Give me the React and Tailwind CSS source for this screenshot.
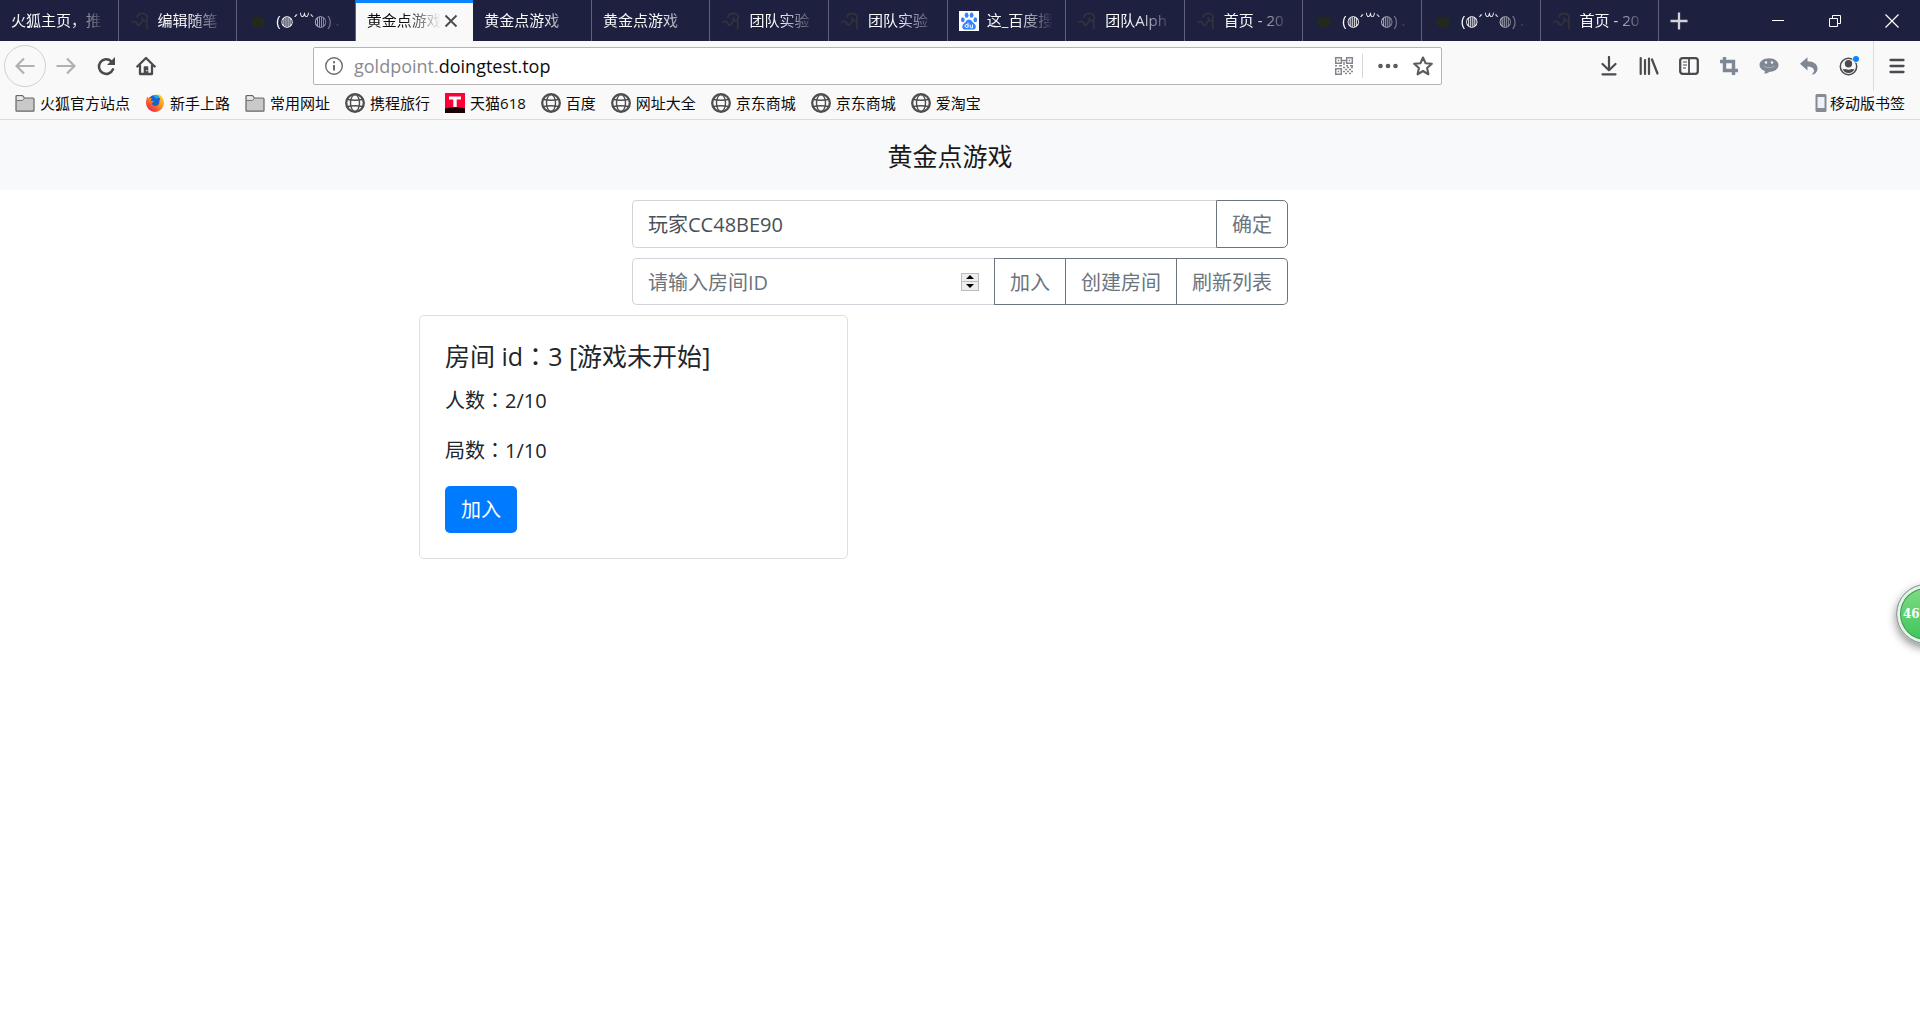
import { useState } from "react";

const TABS = [
  { title: "火狐主页，推" },
  { title: "编辑随笔", icon: "blog" },
  { title: "(◍´꒳`◍) .", icon: "moss" },
  { title: "黄金点游戏", active: true },
  { title: "黄金点游戏" },
  { title: "黄金点游戏" },
  { title: "团队实验", icon: "blog" },
  { title: "团队实验", icon: "blog" },
  { title: "这_百度搜", icon: "baidu" },
  { title: "团队Alph", icon: "blog" },
  { title: "首页 - 20", icon: "blog" },
  { title: "(◍´꒳`◍) .", icon: "moss" },
  { title: "(◍´꒳`◍) .", icon: "moss" },
  { title: "首页 - 20", icon: "blog" },
];

const BOOKMARKS = [
  { name: "火狐官方站点", icon: "folder" },
  { name: "新手上路", icon: "firefox" },
  { name: "常用网址", icon: "folder" },
  { name: "携程旅行", icon: "globe" },
  { name: "天猫618", icon: "tmall" },
  { name: "百度", icon: "globe" },
  { name: "网址大全", icon: "globe" },
  { name: "京东商城", icon: "globe" },
  { name: "京东商城", icon: "globe" },
  { name: "爱淘宝", icon: "globe" },
];

const ROOMS = [{ id: 3, status: "游戏未开始", players: "2/10", rounds: "1/10" }];

function Svg({ children, className = "size-5 shrink-0", viewBox = "0 0 20 20" }) {
  return (
    <svg viewBox={viewBox} className={className} fill="none" aria-hidden="true">
      {children}
    </svg>
  );
}

function Favicon({ type }) {
  if (type === "baidu") {
    return (
      <Svg>
        <rect width="20" height="20" fill="#fff" />
        <g fill="#3385ff">
          <ellipse cx="3.8" cy="8.8" rx="1.9" ry="2.5" />
          <ellipse cx="7.6" cy="4.2" rx="1.9" ry="2.6" />
          <ellipse cx="12.6" cy="4.2" rx="1.9" ry="2.6" />
          <ellipse cx="16.3" cy="8.8" rx="1.9" ry="2.5" />
          <path d="M10 8.6c2.2 0 2.8 1.9 4.3 3.2 1.7 1.4 2.8 2.6 2.5 4.4-.4 2.2-2.3 2.7-4 2.4-1.900-.3-3.600-.3-5.500 0-1.700.3-3.700-.2-4-2.400-.3-1.800.8-3 2.400-4.400C7.200 10.500 7.800 8.600 10 8.600z" />
        </g>
        <path d="M9 11.700v5M9 14.500a1.500 1.500 0 1 0 0 1M11.200 13.600v2.300q0 .9 1 .9h1.300v-3.200" stroke="#fff" strokeWidth="1" />
      </Svg>
    );
  }
  if (type === "moss") {
    return (
      <Svg>
        <path d="M3 9c1-3 3-3 5-2 0-3 2-4 4-3-1 1-1 2 0 3 3-1 5 1 5 4-1 3-3 6-7 6S3 14 3 9z" fill="#23291c" />
      </Svg>
    );
  }
  return (
    <Svg>
      <path
        d="M7 6c0-3 5-4.500 8-3 3 1.800 3 5.500.5 6.500-2.300.8-4-1-3.200-2.500M16.500 8.500c.8 3-.5 5.500.5 9M2 11c3-1.500 4.500 0 5 2 .3 1.500 1.800 1.500 2.800.3L13 9"
        stroke="#32323a"
        strokeWidth="1.800"
        strokeLinecap="round"
      />
    </Svg>
  );
}

function BookmarkIcon({ type }) {
  if (type === "folder") {
    return (
      <Svg>
        <path d="M1 17.500V3.500q0-1 1-1h5.500l2 2.500H18q1 0 1 1v11.500q0 .7-.7.700H1.700q-.7 0-.7-.7z" fill="#c9c9c9" stroke="#666" strokeWidth="1.200" />
        <path d="M1.500 7.500h5.800l2.200-2" stroke="#777" />
        <path d="M2 6.800V3.600h5l1.500 1.900-1.500 1.300z" fill="#e8e8e8" />
      </Svg>
    );
  }
  if (type === "firefox") {
    return (
      <Svg>
        <defs>
          <linearGradient id="fox" x1="1" y1="0" x2="0.200" y2="1">
            <stop offset="0" stopColor="#ffe226" />
            <stop offset="0.450" stopColor="#ff9a1a" />
            <stop offset="1" stopColor="#e8194f" />
          </linearGradient>
        </defs>
        <circle cx="10" cy="9.500" r="7.500" fill="#1665c9" />
        <path d="M8 2.500c2-1.500 6-1 7 2l-4 1z" fill="#2aa7e8" />
        <path
          d="M2.500 3.500c.3 1 .8 1.400 1.500 1.800C5 4.800 6 5 7 5.300c-.8.7-1.200 1.400-1 2.200.6.6 1.700.5 2.800.6-.2 1.300-1.800 1.600-2 2.500.5 2.300 4 3 6 1.600 1.500-1 2-3 1.200-5.200 0 0 .8.300 1.200 1C15.300 5 13.500 3.500 13 1c3 1 6 4.500 6 9a9 9 0 0 1-18 0c0-2.500.5-5 1.500-6.500z"
          fill="url(#fox)"
        />
      </Svg>
    );
  }
  if (type === "tmall") {
    return (
      <Svg>
        <rect width="20" height="20" fill="#ff0036" />
        <path d="M0 15.500q10-2.500 20 0V20H0z" fill="#180006" />
        <path d="M4 3.500h12v3h-4.300V14H8.300V6.500H4z" fill="#fff" />
      </Svg>
    );
  }
  return (
    <Svg>
      <circle cx="10" cy="10" r="8.800" stroke="#4d4d4f" strokeWidth="2.300" />
      <ellipse cx="10" cy="10" rx="4.500" ry="8.500" stroke="#4d4d4f" strokeWidth="1.400" />
      <path d="M2.500 6.500q7.500 1.500 15 0M2.500 13.500q7.500-1.500 15 0" stroke="#4d4d4f" strokeWidth="1.400" />
    </Svg>
  );
}

function Tab({ tab }) {
  return (
    <div
      className={
        tab.active
          ? "flex min-w-0 flex-1 basis-0 items-center border-t-[3px] border-[#0a84ff] bg-[#f9f9fa] pr-3 pb-[3px] pl-[11px] text-[#0c0c0d]"
          : "flex min-w-0 flex-1 basis-0 items-center gap-2 border-r border-[#60617f] pr-3 pl-[11px] text-[#f9f9fa]"
      }
    >
      {tab.icon ? <Favicon type={tab.icon} /> : null}
      <a
        href="#"
        className="min-w-0 flex-1 overflow-hidden whitespace-nowrap [mask-image:linear-gradient(to_left,transparent,black_36px)]"
      >
        {tab.title}
      </a>
      {tab.active ? (
        <button aria-label="关闭标签页" className="shrink-0">
          <Svg>
            <path d="M4.500 4.500l11 11M15.500 4.500l-11 11" stroke="#4a4a4f" strokeWidth="1.800" />
          </Svg>
        </button>
      ) : null}
    </div>
  );
}

function TabBar() {
  return (
    <div className="flex h-[41px] bg-[#1e2040] text-[15px]">
      {TABS.map((t, i) => (
        <Tab key={i} tab={t} />
      ))}
      <div className="flex w-[261px] shrink-0 items-center">
        <button aria-label="新标签页" className="flex w-10 justify-center">
          <Svg>
            <path d="M10 1.500v17M1.500 10h17" stroke="#d2d2d9" strokeWidth="2.300" />
          </Svg>
        </button>
        <div className="ml-auto flex text-white">
          <button aria-label="最小化" className="flex w-[57px] justify-center">
            <Svg>
              <path d="M4 9.500h12" stroke="currentColor" />
            </Svg>
          </button>
          <button aria-label="还原" className="flex w-[57px] justify-center">
            <Svg>
              <path d="M4.500 7.500h8v8h-8zM7.500 7.500v-3h8v8h-3" stroke="currentColor" />
            </Svg>
          </button>
          <button aria-label="关闭" className="flex w-[57px] justify-center">
            <Svg>
              <path d="M3.500 3.500l13 13M16.500 3.500l-13 13" stroke="currentColor" strokeWidth="1.200" />
            </Svg>
          </button>
        </div>
      </div>
    </div>
  );
}

function ToolButton({ label, children }) {
  return (
    <button aria-label={label} className="flex h-10 w-10 shrink-0 items-center justify-center">
      <Svg>{children}</Svg>
    </button>
  );
}

function QrIcon() {
  return (
    <Svg>
      <g stroke="#85858f" strokeWidth="1.500">
        <path d="M1.700 1.700h5.600v5.600H1.700zM12.700 1.700h5.600v5.600h-5.600zM1.700 12.700h5.600v5.600H1.700z" />
        <path d="M8 4.500h4M10 6v3M1 9.800h2m2 0h3m4 0h2m2 0h3M9 11.500h2m2 0h2m2 0h2M11 13.500h2m2 0h2M9 15.500h2m2 0h2m2 0h2M11 17.500h2m2 0h2" />
      </g>
      <path d="M3.800 3.800h1.400v1.400H3.800zM14.800 3.800h1.400v1.400h-1.400zM3.800 14.800h1.400v1.400H3.800z" fill="#85858f" />
    </Svg>
  );
}

function NavBar() {
  return (
    <div className="flex h-[50px] items-center bg-[#f9f9fa] text-[#4a4a4f]">
      <button
        aria-label="后退"
        className="ml-1 flex size-[42px] shrink-0 items-center justify-center rounded-full border border-[#d0d0d0] text-[#b1b1b3]"
      >
        <Svg>
          <path d="M19.500 10H2M9 2.500L1.500 10 9 17.500" stroke="currentColor" strokeWidth="2.200" />
        </Svg>
      </button>
      <button aria-label="前进" className="flex h-10 w-10 shrink-0 items-center justify-center text-[#b1b1b3]">
        <Svg>
          <path d="M.5 10H18M11 2.500L18.500 10 11 17.500" stroke="currentColor" strokeWidth="2.200" />
        </Svg>
      </button>
      <ToolButton label="刷新">
        <path d="M15.300 5.300A7.300 7.300 0 1 0 17 13.300" stroke="currentColor" strokeWidth="2.500" strokeLinecap="round" />
        <path d="M19 1v7.500q0 .5-.5.500H11z" fill="currentColor" />
      </ToolButton>
      <ToolButton label="主页">
        <path d="M1.300 10.500L10 2l8.700 8.500M4 9.500V18h12V9.500" stroke="currentColor" strokeWidth="2.300" strokeLinecap="round" strokeLinejoin="round" />
        <path d="M7.700 18v-7q0-.7.700-.7h3.200q.7 0 .7.700v7z" fill="currentColor" />
        <path d="M10.800 14v1.200" stroke="#f9f9fa" strokeWidth="1.200" />
      </ToolButton>

      <div className="mx-[147px] flex h-[38px] min-w-0 flex-1 items-center rounded-xs border border-[#b5b5b5] bg-white pr-2 pl-[10px] text-[18px]">
        <Svg>
          <circle cx="10" cy="10" r="8.300" stroke="#6b6b70" strokeWidth="1.400" />
          <path d="M10 9v5.500M10 5.200v2" stroke="#6b6b70" strokeWidth="2" />
        </Svg>
        <a href="#" className="ml-[10px] flex-1 text-[#0c0c0d]">
          <span className="text-[#8a8a8e]">goldpoint.</span>doingtest.top
        </a>
        <QrIcon />
        <div className="ml-2 h-6 w-px bg-[#d7d7db]" />
        <button aria-label="页面操作" className="ml-[15px]">
          <Svg>
            <g fill="#5a5a5f">
              <circle cx="2.500" cy="10" r="2.300" />
              <circle cx="10" cy="10" r="2.300" />
              <circle cx="17.500" cy="10" r="2.300" />
            </g>
          </Svg>
        </button>
        <button aria-label="添加书签" className="ml-[15px]">
          <Svg>
            <path
              d="M10 1.500l2.500 5.700 6.300.6-4.700 4.200 1.300 6.300-5.400-3.300-5.400 3.300 1.300-6.300L1.200 7.800l6.300-.6z"
              stroke="#5a5a5f"
              strokeWidth="2.100"
              strokeLinejoin="round"
            />
          </Svg>
        </button>
      </div>

      <ToolButton label="下载">
        <path d="M10 1v12M3.500 8l6.500 6.300L16.500 8M3.500 18.300h13" stroke="currentColor" strokeWidth="2.200" strokeLinecap="round" strokeLinejoin="round" />
      </ToolButton>
      <ToolButton label="我的足迹">
        <path d="M1.700 2v16M6 4v14M10 2.500V18M13 3.500l5.500 14" stroke="currentColor" strokeWidth="2.200" strokeLinecap="round" />
      </ToolButton>
      <ToolButton label="侧栏">
        <rect x="1.200" y="2.200" width="17.600" height="15.600" rx="2.500" stroke="currentColor" strokeWidth="2.300" />
        <path d="M10 2.500v15" stroke="currentColor" strokeWidth="1.800" />
        <path d="M4 6h4M4 9h4M4 12h3" stroke="currentColor" strokeWidth="1.200" />
      </ToolButton>
      <ToolButton label="截图">
        <path d="M5.500 1v13.500H19M1 5.500h13.500V19" stroke="#7f8794" strokeWidth="3.400" />
      </ToolButton>
      <ToolButton label="聊天">
        <path d="M10 2.200c5.300 0 9.500 2.800 9.500 6.800s-4.200 6.800-9 6.800c-1.200 1-3.500 2-5.500 2 .7-.8 1-1.800.8-2.800C2.600 13.800.5 11.700.5 9c0-4 4.200-6.800 9.500-6.800z" fill="#7f8794" />
        <circle cx="7" cy="6.500" r="1.200" fill="#f9f9fa" />
        <circle cx="13" cy="6.500" r="1.200" fill="#f9f9fa" />
        <path d="M4.500 10q5.500 3.500 11 0" stroke="#a9afb8" />
      </ToolButton>
      <ToolButton label="撤销">
        <path d="M1 7.700L8.500 1.200v4c6 .1 10 2.900 10 7.300 0 2.300-1.200 4.300-3.200 5.800l-2.800.2c2.200-1.500 3-3.200 2.300-5-.8-2-3-3-6.300-3v4z" fill="#7f8794" />
      </ToolButton>
      <ToolButton label="账户">
        <circle cx="9.500" cy="10.500" r="8.200" stroke="currentColor" strokeWidth="1.500" />
        <circle cx="9.500" cy="7.800" r="3.700" fill="currentColor" />
        <path d="M3.500 12.500q1 1 3 .5 3 1.500 6 0 2 .5 3-.5-1.500 4.500-6 4.500t-6-4.500z" fill="currentColor" />
        <circle cx="17" cy="3" r="3.700" fill="#f9f9fa" />
        <circle cx="17" cy="3" r="3" fill="#0a84ff" />
      </ToolButton>
      <div className="ml-1 h-full w-px bg-[#dcdcdf]" />
      <button aria-label="打开菜单" className="flex w-[46px] shrink-0 justify-center">
        <Svg>
          <path d="M3.500 4h13M3.500 10h13M3.500 16h13" stroke="currentColor" strokeWidth="2.300" strokeLinecap="round" />
        </Svg>
      </button>
    </div>
  );
}

function BookmarkBar() {
  return (
    <div className="flex h-[29px] items-center gap-[15px] border-b border-[#dcdcdc] bg-[#f9f9fa] pr-[15px] pb-1 pl-[15px] text-[15px] text-[#0c0c0d]">
      {BOOKMARKS.map((b, i) => (
        <a key={i} href="#" className="flex items-center gap-[5px] whitespace-nowrap">
          <BookmarkIcon type={b.icon} />
          {b.name}
        </a>
      ))}
      <a href="#" className="ml-auto flex items-center gap-[3px] whitespace-nowrap">
        <Svg className="h-5 w-3 shrink-0" viewBox="0 0 12 20">
          <rect x="0.500" y="1" width="11" height="18" rx="1.500" fill="#858a94" />
          <rect x="2.500" y="4" width="7" height="11" fill="#eef1f6" />
        </Svg>
        移动版书签
      </a>
    </div>
  );
}

// full-width colon, centred in its cell
function Colon() {
  return <span className="font-['Noto_Sans_CJK_TC',sans-serif] leading-none">：</span>;
}

function RoomCard({ room }) {
  return (
    <div className="w-full max-w-[429px] rounded-[5px] border border-[#dfdfdf] bg-white p-[25px]">
      <h5 className="mb-[15px] text-[25px] leading-[30px]">
        房间 id<Colon />
        {room.id} [{room.status}]
      </h5>
      <p className="mb-5">
        人数
        <Colon />
        {room.players}
      </p>
      <p className="mb-5">
        局数
        <Colon />
        {room.rounds}
      </p>
      <button className="block h-[47px] rounded-[5px] bg-[#007bff] px-4 text-white">加入</button>
    </div>
  );
}

export default function App() {
  const [name, setName] = useState("玩家CC48BE90");
  const [roomId, setRoomId] = useState("");

  const step = (n) => setRoomId(String(Math.max(0, Number(roomId) + n)));

  return (
    <div className="relative min-h-screen overflow-hidden bg-white font-['Open_Sans','Noto_Sans_CJK_SC','DejaVu_Sans',sans-serif]">
      <TabBar />
      <NavBar />
      <BookmarkBar />

      <header className="flex h-[70px] items-center justify-center bg-[#f8f9fa] pt-1 pr-5">
        <a href="#" className="text-[25px] text-[#191919]">
          黄金点游戏
        </a>
      </header>

      <main className="text-[20px] leading-[30px] text-[#212529]">
        <div className="mx-auto mt-[10px] max-w-[656px] text-[#6c757d]">
          <div className="flex h-12">
            <input
              aria-label="玩家昵称"
              value={name}
              onChange={(e) => setName(e.target.value)}
              className="min-w-0 flex-1 rounded-l-[5px] border border-r-0 border-[#ced4da] px-[15px] pt-[2px] text-[#495057] outline-none"
            />
            <button className="rounded-r-[5px] border border-[#6c757d] px-[15px] pt-[2px]">确定</button>
          </div>

          <div className="mt-[10px] flex h-[47px]">
            <div className="flex min-w-0 flex-1 items-center rounded-l-[5px] border border-r-0 border-[#ced4da] px-[15px]">
              <input
                aria-label="房间ID"
                inputMode="numeric"
                placeholder="请输入房间ID"
                value={roomId}
                onChange={(e) => setRoomId(e.target.value)}
                className="min-w-0 flex-1 pt-[2px] outline-none placeholder:text-[#6c757d]"
              />
              <div className="flex w-[18px] flex-col border border-[#bcbcbc] bg-[#eeeeee]">
                <button aria-label="增加" onClick={() => step(1)} className="flex h-2 items-center justify-center border-b border-[#bcbcbc]">
                  <Svg className="h-1 w-2" viewBox="0 0 8 4">
                    <path d="M0 4l4-4 4 4z" fill="#000" />
                  </Svg>
                </button>
                <button aria-label="减少" onClick={() => step(-1)} className="flex h-2 items-center justify-center">
                  <Svg className="h-1 w-2" viewBox="0 0 8 4">
                    <path d="M0 0l4 4 4-4z" fill="#000" />
                  </Svg>
                </button>
              </div>
            </div>
            <button className="border border-[#6c757d] px-[15px] pt-[2px]">加入</button>
            <button className="border border-l-0 border-[#6c757d] px-[15px] pt-[2px]">创建房间</button>
            <button className="rounded-r-[5px] border border-l-0 border-[#6c757d] px-[15px] pt-[2px]">刷新列表</button>
          </div>
        </div>

        <div className="mx-auto mt-[10px] max-w-[1082px]">
          {ROOMS.map((r) => (
            <RoomCard key={r.id} room={r} />
          ))}
        </div>
      </main>

      {/* floating speed ball, half off the right edge */}
      <div className="absolute top-[584px] -right-9 flex size-[60px] items-center rounded-full border border-[#8f979b] bg-linear-to-b from-[#7fdc86] to-[#35c457] pl-[6px] font-['DejaVu_Serif',serif] text-[12px] font-bold text-white shadow-[0_4px_10px_rgba(0,0,0,0.45),inset_0_0_0_3px_#e6f2ea,inset_0_0_0_4px_#3a9c50]">
        46%
      </div>
    </div>
  );
}
